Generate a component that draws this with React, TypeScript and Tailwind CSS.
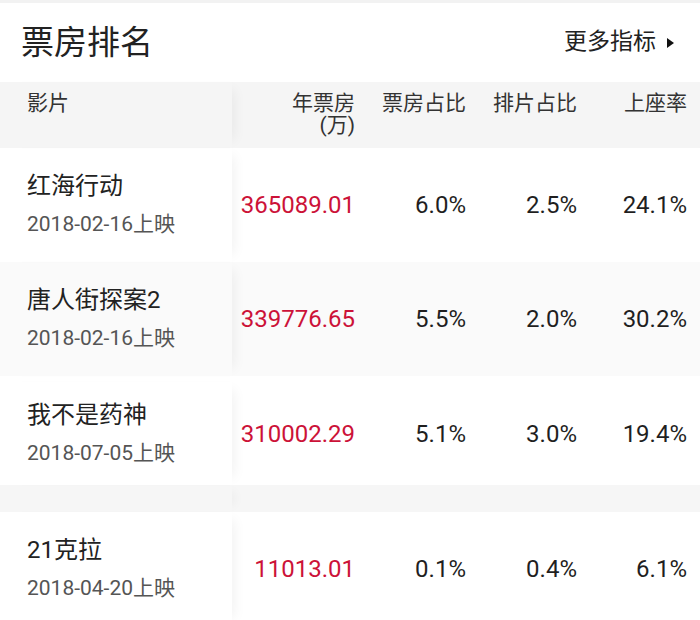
import React from "react";

const rows = [
  { name: "红海行动", date: "2018-02-16上映", box: "365089.01", a: "6.0%", b: "2.5%", c: "24.1%", bg: "bg-white", h: "h-[114px]", pt: "" },
  { name: "唐人街探案2", date: "2018-02-16上映", box: "339776.65", a: "5.5%", b: "2.0%", c: "30.2%", bg: "bg-[#fafafa]", h: "h-[114px]", pt: "" },
  { name: "我不是药神", date: "2018-07-05上映", box: "310002.29", a: "5.1%", b: "3.0%", c: "19.4%", bg: "bg-white", h: "h-[109px]", pt: "pt-[6px]" },
];

const last = { name: "21克拉", date: "2018-04-20上映", box: "11013.01", a: "0.1%", b: "0.4%", c: "6.1%" };

const font = { fontFamily: 'Roboto, "Noto Sans CJK SC", sans-serif' };

function Row({ r, bg, h, pt }: { r: typeof last; bg: string; h: string; pt: string }) {
  return (
    <div className={`flex ${bg} ${h} ${pt}`}>
      <div className="relative z-10 flex w-[232px] shrink-0 flex-col justify-center pl-[27px] shadow-[10px_0_12px_-8px_rgba(0,0,0,0.06)]">
        <div className="text-[24px] leading-[30px] text-[#222]">{r.name}</div>
        <div className="mt-[8px] text-[21px] leading-[30px] text-[#555]">{r.date}</div>
      </div>
      <div className="flex w-[136px] items-center justify-end pr-[13px] text-[24px] text-[#cc1238]">{r.box}</div>
      <div className="flex w-[111px] items-center justify-end pr-[13px] text-[24px] text-[#1f1f1f]">{r.a}</div>
      <div className="flex w-[111px] items-center justify-end pr-[13px] text-[24px] text-[#1f1f1f]">{r.b}</div>
      <div className="flex w-[110px] items-center justify-end pr-[13px] text-[24px] text-[#1f1f1f]">{r.c}</div>
    </div>
  );
}

export default function App() {
  return (
    <div className="h-[620px] w-[700px] overflow-hidden bg-white" style={font}>
      <div className="h-[3px] bg-[#f2f2f2]" />
      <div className="flex h-[79px] items-center justify-between pl-[21px] pr-[26px]">
        <div className="text-[33px] leading-none text-[#222]">票房排名</div>
        <div className="flex items-center text-[23px] text-[#222]">
          <span>更多指标</span>
          <svg width="7" height="10" viewBox="0 0 7 10" className="ml-[11px]">
            <path d="M0 0 L7 5 L0 10 Z" fill="#111" />
          </svg>
        </div>
      </div>
      <div className="flex h-[66px] bg-[#f5f5f5] text-[21px] leading-[22px] text-[#333]">
        <div className="relative z-10 w-[232px] shrink-0 pl-[27px] pt-[10px] shadow-[10px_0_12px_-8px_rgba(0,0,0,0.06)]">影片</div>
        <div className="w-[136px] pr-[13px] pt-[10px] text-right">
          <div>年票房</div>
          <div>(万)</div>
        </div>
        <div className="w-[111px] pr-[13px] pt-[10px] text-right">票房占比</div>
        <div className="w-[111px] pr-[13px] pt-[10px] text-right">排片占比</div>
        <div className="w-[110px] pr-[13px] pt-[10px] text-right">上座率</div>
      </div>
      {rows.map((r) => (
        <Row key={r.name} r={r} bg={r.bg} h={r.h} pt={r.pt} />
      ))}
      <div className="flex h-[27px] bg-[#f6f6f6]">
        <div className="relative z-10 w-[232px] shrink-0 shadow-[10px_0_12px_-8px_rgba(0,0,0,0.06)]" />
      </div>
      <Row r={last} bg="bg-white" h="h-[114px]" pt="" />
    </div>
  );
}
